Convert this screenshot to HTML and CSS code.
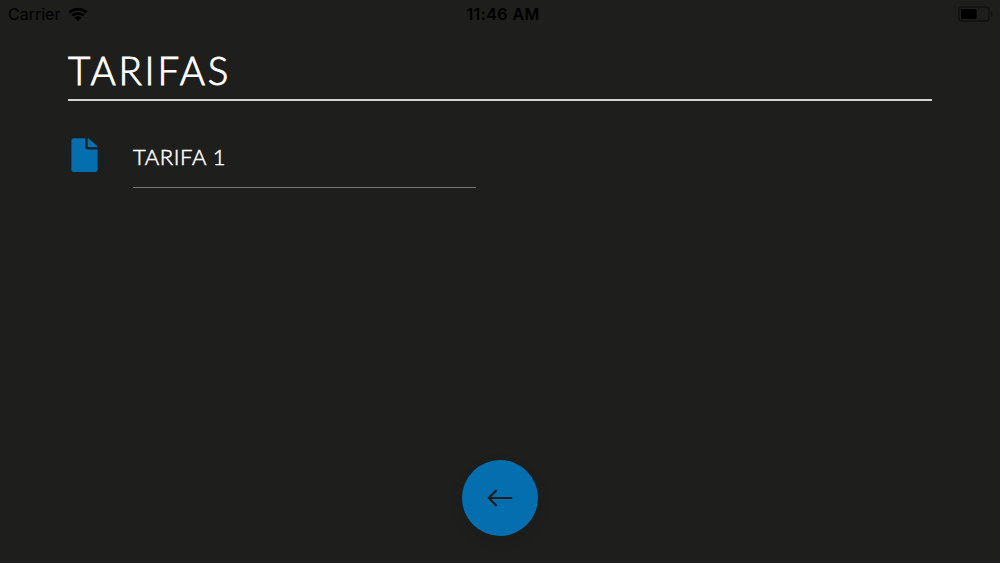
FILE: index.html
```
<!DOCTYPE html>
<html lang="es">
<head>
    <meta charset="utf-8">
    <title>Tarifas</title>
    <link rel="stylesheet" href="styles.css">
</head>
<body>
    <div class="status-bar">
        <div class="carrier">
            <span class="carrier-name">Carrier</span>
            <svg class="wifi" width="20" height="14" viewBox="0 0 20 14">
                <path d="M0.4 4.6a13.6 13.6 0 0 1 19.2 0l-2 2a10.8 10.8 0 0 0-15.2 0z"/>
                <path d="M3.5 7.7a9.2 9.2 0 0 1 13 0l-1.9 1.9a6.5 6.5 0 0 0-9.2 0z"/>
                <path d="M6.6 10.7a4.9 4.9 0 0 1 6.8 0L10 14z"/>
            </svg>
        </div>
        <div class="time">11:46 AM</div>
        <svg class="battery" width="35" height="16" viewBox="0 0 35 16">
            <rect class="battery-case" x="1" y="1" width="30" height="14" rx="3"/>
            <rect x="3" y="3" width="15.5" height="10" rx="1"/>
            <path class="battery-tip" d="M33 5.5c2 .6 2 4.4 0 5z"/>
        </svg>
    </div>

    <main class="content">
        <h1>TARIFAS</h1>
        <ul class="rates">
            <li class="rate">
                <svg class="file-icon" width="27" height="35" viewBox="0 0 27 35">
                    <path d="M2.9 0.3H14.3V8.6a2.9 2.9 0 0 0 2.9 2.9H26.6V31.6a2.5 2.5 0 0 1-2.5 2.5H2.9A2.5 2.5 0 0 1 .4 31.6V2.8A2.5 2.5 0 0 1 2.9 .3z"/>
                    <path d="M16.6 0.3H17.4L26.5 8.2V9.2H17.4a.8.8 0 0 1-.8-.8z"/>
                </svg>
                <span class="rate-name">TARIFA 1</span>
            </li>
        </ul>
    </main>

    <footer>
        <button class="back" type="button" aria-label="Volver">
            <svg width="26" height="18" viewBox="0 0 26 18">
                <path d="M9 1.8L1.7 9L9 16.2M2 9H24.3"/>
            </svg>
        </button>
    </footer>
</body>
</html>
```
FILE: styles.css
```
* {
    box-sizing: border-box;
}

body {
    margin: 0;
    height: 563px;
    display: flex;
    flex-direction: column;
    overflow: hidden;
    background-color: #1e1e1c;
    color: #fff;
    font-family: Lato, sans-serif;
}

.status-bar {
    display: grid;
    grid-template-columns: 1fr auto 1fr;
    align-items: center;
    height: 28px;
    padding: 0 7px 0 8px;
    color: #000;
    font-family: Inter, sans-serif;
    font-size: 16px;
}

.carrier {
    display: flex;
    align-items: center;
    gap: 8px;
}

.time {
    padding-left: 5px;
    font-weight: 600;
    letter-spacing: 0.4px;
}

.battery {
    justify-self: end;
}

.battery-case {
    fill: none;
    stroke: #11110f;
    stroke-width: 1.5;
}

.battery-tip {
    fill: #11110f;
}

.content {
    flex: 1;
    padding: 0 68px;
}

h1 {
    height: 73px;
    margin: 0;
    padding-top: 19px;
    border-bottom: 2px solid #d5d5d8;
    font-size: 38.5px;
    font-weight: 300;
    line-height: 46px;
    letter-spacing: 2.8px;
    -webkit-text-stroke: 0.9px #fff;
}

.rates {
    margin: 0;
    padding: 0;
    list-style: none;
}

.rate {
    display: flex;
    width: 408px;
    padding-top: 37px;
}

.file-icon {
    margin: 0 35px 0 3px;
    fill: #046eaf;
}

.rate-name {
    flex: 1;
    height: 50px;
    padding-top: 5px;
    border-bottom: 1px solid #747472;
    font-size: 22px;
    font-weight: 300;
    line-height: 28px;
    letter-spacing: 0.6px;
    -webkit-text-stroke: 0.5px #fff;
}

footer {
    display: flex;
    justify-content: center;
    padding-bottom: 27.5px;
}

.back {
    display: flex;
    align-items: center;
    justify-content: center;
    width: 76px;
    height: 76px;
    padding: 0;
    border: none;
    border-radius: 50%;
    background-color: #046eaf;
    box-shadow: 0 5px 14px rgba(0, 0, 0, 0.1);
}

.back path {
    fill: none;
    stroke: #1e1e1c;
    stroke-width: 2.2;
    stroke-linecap: round;
    stroke-linejoin: round;
}
```
